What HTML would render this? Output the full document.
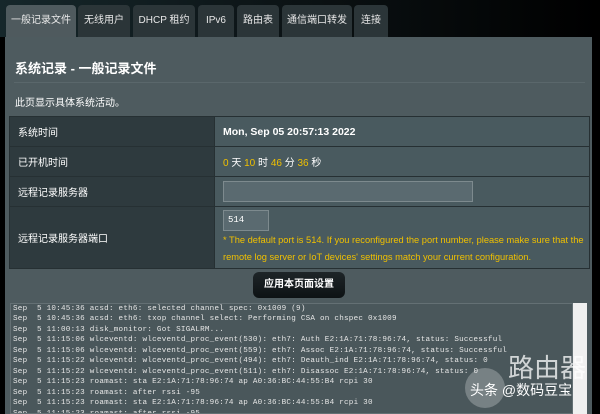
<!DOCTYPE html>
<html><head><meta charset="utf-8"><style>
*{margin:0;padding:0;box-sizing:border-box}
body{width:600px;height:414px;overflow:hidden;background:#000;font-family:"Liberation Sans","Noto Sans CJK SC",sans-serif;color:#fff;position:relative}
.bgtop{position:absolute;left:0;top:0;width:600px;height:37px;background:linear-gradient(90deg,#16272b,#0b1214 50%,#000)}
.tab{position:absolute;top:5px;height:32px;background:#2b3538;border-radius:4px 4px 0 0;font-size:10px;line-height:32px;text-align:center;color:#e8e8e8}
.tab.on{background:#4f5a5e}
.panel{position:absolute;left:5px;top:37px;width:587px;height:377px;background:#4e5b5f}
.title{position:absolute;left:15px;top:58px;font-size:13px;font-weight:bold}
.hr{position:absolute;left:14px;top:82px;width:571px;height:1px;background:#3a4548;border-bottom:1px solid #5a676b}
.desc{position:absolute;left:15px;top:94px;font-size:10px}
.tbl{position:absolute;left:9px;top:116px;width:581px;height:153px;border:1px solid #263033}
.row{position:absolute;left:0;width:579px;border-bottom:1px solid #263033}
.l{position:absolute;left:0;top:0;bottom:0;width:205px;background:#2e3a3e;border-right:1px solid #263033;font-size:10px;padding-left:8px;display:flex;align-items:center}
.r{position:absolute;left:205px;top:0;bottom:0;right:0;background:#495a5f;font-size:10px;padding-left:8px;display:flex;align-items:center}
.y{color:#f0c000}
.btn{position:absolute;left:253px;top:272px;width:92px;height:26px;background:linear-gradient(#1e2528,#0d1214);border-radius:6px;font-size:10px;font-weight:bold;text-align:center;line-height:26px}
.log{position:absolute;left:10px;top:303px;width:563px;height:111px;background:#4a575b;border:1px solid #647074;font-family:"Liberation Mono",monospace;font-size:7.6px;letter-spacing:0.24px;line-height:10.45px;color:#e6e6e6;white-space:pre;overflow:hidden;padding:0 0 0 2px}
.sb{position:absolute;left:573px;top:303px;width:14px;height:111px;background:#f0f0f0}
.wm{position:absolute;left:470px;top:380px;font-size:14px;color:#fff}
</style></head><body>
<div class="bgtop"></div>
<div class="panel"></div>
<div class="tab on" style="left:6px;width:70px">一般记录文件</div>
<div class="tab" style="left:78px;width:52px">无线用户</div>
<div class="tab" style="left:133px;width:62px">DHCP 租约</div>
<div class="tab" style="left:198px;width:36px">IPv6</div>
<div class="tab" style="left:237px;width:42px">路由表</div>
<div class="tab" style="left:282px;width:70px">通信端口转发</div>
<div class="tab" style="left:354px;width:34px">连接</div>
<div class="title">系统记录 - 一般记录文件</div>
<div class="hr"></div>
<div class="desc">此页显示具体系统活动。</div>
<div class="tbl">
<div class="row" style="top:0;height:30px"><div class="l">系统时间</div><div class="r" style="font-weight:bold;font-size:10.5px">Mon, Sep 05 20:57:13 2022</div></div>
<div class="row" style="top:30px;height:30px"><div class="l">已开机时间</div><div class="r"><span><span class="y">0</span> 天 <span class="y">10</span> 时 <span class="y">46</span> 分 <span class="y">36</span> 秒</span></div></div>
<div class="row" style="top:60px;height:30px"><div class="l">远程记录服务器</div><div class="r"><div style="width:250px;height:21px;background:#5a6a70;border:1px solid #7d8a8e"></div></div></div>
<div class="row" style="top:90px;height:61px;border:none"><div class="l">远程记录服务器端口</div><div class="r" style="display:block;padding-top:3px"><div style="width:46px;height:21px;background:#5a6a70;border:1px solid #7d8a8e;font-family:'Liberation Mono',monospace;font-size:9px;line-height:19px;padding-left:4px">514</div><div class="y" style="font-size:9.3px;line-height:17px;margin-top:1px">* The default port is 514. If you reconfigured the port number, please make sure that the<br>remote log server or IoT devices' settings match your current configuration.</div></div></div>
</div>
<div class="btn">应用本页面设置</div>
<div class="log">Sep  5 10:45:36 acsd: eth6: selected channel spec: 0x1009 (9)
Sep  5 10:45:36 acsd: eth6: txop channel select: Performing CSA on chspec 0x1009
Sep  5 11:00:13 disk_monitor: Got SIGALRM...
Sep  5 11:15:06 wlceventd: wlceventd_proc_event(530): eth7: Auth E2:1A:71:78:96:74, status: Successful
Sep  5 11:15:06 wlceventd: wlceventd_proc_event(559): eth7: Assoc E2:1A:71:78:96:74, status: Successful
Sep  5 11:15:22 wlceventd: wlceventd_proc_event(494): eth7: Deauth_ind E2:1A:71:78:96:74, status: 0
Sep  5 11:15:22 wlceventd: wlceventd_proc_event(511): eth7: Disassoc E2:1A:71:78:96:74, status: 0
Sep  5 11:15:23 roamast: sta E2:1A:71:78:96:74 ap A0:36:BC:44:55:B4 rcpi 30
Sep  5 11:15:23 roamast: after rssi -95
Sep  5 11:15:23 roamast: sta E2:1A:71:78:96:74 ap A0:36:BC:44:55:B4 rcpi 30
Sep  5 11:15:23 roamast: after rssi -95</div>
<div class="sb"></div>
<div style="position:absolute;left:465px;top:368px;width:40px;height:40px;border-radius:50%;background:rgba(255,255,255,0.25)"></div>
<div style="position:absolute;left:508px;top:348px;font-size:26px;color:rgba(255,255,255,0.75)">路由器</div>
<div class="wm">头条 @数码豆宝</div>
</body></html>
